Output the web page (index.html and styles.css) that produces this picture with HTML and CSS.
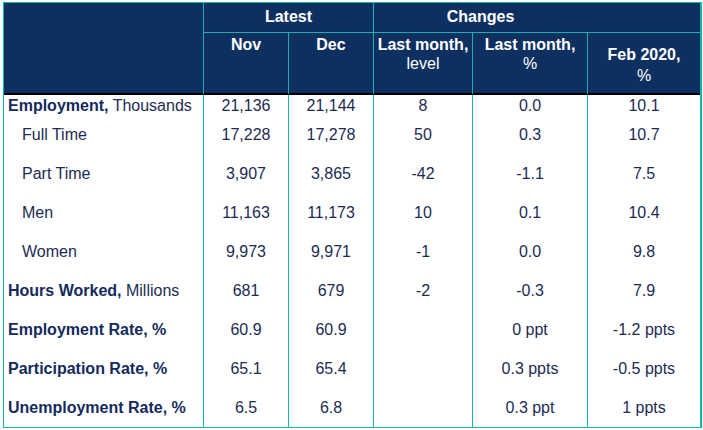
FILE: index.html
```html
<!DOCTYPE html>
<html lang="en">
<head>
<meta charset="utf-8">
<title>Labour force summary</title>
<link rel="stylesheet" href="styles.css">
</head>
<body>
<div class="tbl">
  <div class="cell hd corner"></div>
  <div class="cell hd grp latest">Latest</div>
  <div class="cell hd grp changes"><span>Changes</span></div>

  <div class="cell hd sub"><div>Nov</div></div>
  <div class="cell hd sub"><div>Dec</div></div>
  <div class="cell hd sub"><div>Last month,<br><span class="norm">level</span></div></div>
  <div class="cell hd sub"><div>Last month,<br><span class="norm">%</span></div></div>
  <div class="cell hd sub mid"><div>Feb 2020,<br><span class="norm">%</span></div></div>

  <div class="cell lbl"><span><b>Employment,</b> Thousands</span></div>
  <div class="cell num">21,136</div><div class="cell num">21,144</div><div class="cell num">8</div><div class="cell num">0.0</div><div class="cell num">10.1</div>

  <div class="cell lbl ind">Full Time</div>
  <div class="cell num">17,228</div><div class="cell num">17,278</div><div class="cell num">50</div><div class="cell num">0.3</div><div class="cell num">10.7</div>

  <div class="cell lbl ind">Part Time</div>
  <div class="cell num">3,907</div><div class="cell num">3,865</div><div class="cell num">-42</div><div class="cell num">-1.1</div><div class="cell num">7.5</div>

  <div class="cell lbl ind">Men</div>
  <div class="cell num">11,163</div><div class="cell num">11,173</div><div class="cell num">10</div><div class="cell num">0.1</div><div class="cell num">10.4</div>

  <div class="cell lbl ind">Women</div>
  <div class="cell num">9,973</div><div class="cell num">9,971</div><div class="cell num">-1</div><div class="cell num">0.0</div><div class="cell num">9.8</div>

  <div class="cell lbl"><span><b>Hours Worked,</b> Millions</span></div>
  <div class="cell num">681</div><div class="cell num">679</div><div class="cell num">-2</div><div class="cell num">-0.3</div><div class="cell num">7.9</div>

  <div class="cell lbl"><b>Employment Rate, %</b></div>
  <div class="cell num">60.9</div><div class="cell num">60.9</div><div class="cell num"></div><div class="cell num">0 ppt</div><div class="cell num">-1.2 ppts</div>

  <div class="cell lbl"><b>Participation Rate, %</b></div>
  <div class="cell num">65.1</div><div class="cell num">65.4</div><div class="cell num"></div><div class="cell num">0.3 ppts</div><div class="cell num">-0.5 ppts</div>

  <div class="cell lbl"><b>Unemployment Rate, %</b></div>
  <div class="cell num">6.5</div><div class="cell num">6.8</div><div class="cell num"></div><div class="cell num">0.3 ppt</div><div class="cell num">1 ppts</div>
</div>
</body>
</html>
```
FILE: styles.css
```css
body {
  margin: 0;
  background: #ffffff;
  font-family: "Liberation Sans", Arial, sans-serif;
  font-size: 16px;
}

.tbl {
  display: grid;
  grid-template-columns: 199px 85px 85px 99px 115px 113px;
  grid-template-rows: 30px 62px 20px repeat(8, 39px);
  width: max-content;
  margin: 2px 0 0 3px;
  border: 1px solid #13b2ac;
  border-right-width: 2px;
}

.cell {
  box-sizing: border-box;
  display: flex;
  line-height: 18px;
}

.hd {
  background: #0d3061;
  color: #ffffff;
  font-weight: bold;
}

.corner {
  grid-row: 1 / span 2;
  border-bottom: 2px solid #000000;
}

.grp {
  align-items: center;
  justify-content: center;
  border-left: 1px solid #13b2ac;
  border-bottom: 1px solid #13b2ac;
  padding-bottom: 1px;
}

.latest {
  grid-column: span 2;
}

.changes {
  grid-column: span 3;
  padding-right: 113px;
}

.sub {
  border-left: 1px solid #13b2ac;
  border-bottom: 2px solid #000000;
  justify-content: center;
  align-items: flex-start;
  text-align: center;
  line-height: 19px;
  padding-top: 2px;
  white-space: nowrap;
}

.sub.mid {
  align-items: center;
  line-height: 21px;
  padding-top: 3px;
}

.norm {
  font-weight: normal;
}

.lbl {
  align-items: center;
  padding-left: 4px;
  padding-top: 1px;
  color: #1d2b52;
  white-space: nowrap;
}

.lbl b {
  color: #142a5c;
}

.lbl.ind {
  padding-left: 18px;
}

.num {
  align-items: center;
  justify-content: center;
  padding-top: 1px;
  border-left: 1px solid #13b2ac;
  color: #1d2b52;
  white-space: nowrap;
}
```
